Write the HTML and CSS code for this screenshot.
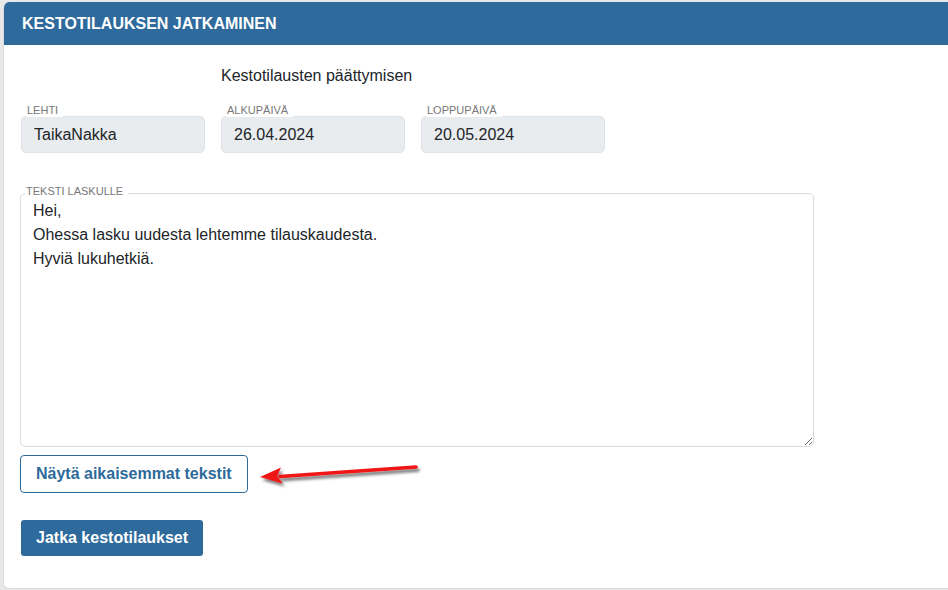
FILE: index.html
```html
<!DOCTYPE html>
<html lang="fi">
<head>
<meta charset="utf-8">
<title>Kestotilauksen jatkaminen</title>
<link rel="stylesheet" href="styles.css">
</head>
<body>
<div class="card">
  <div class="card-header">KESTOTILAUKSEN JATKAMINEN</div>
  <div class="card-body">
    <div class="fields-grid">
      <div class="intro">Kestotilausten päättymisen</div>
      <div class="field">
        <label class="float-label">Lehti</label>
        <div class="input">TaikaNakka</div>
      </div>
      <div class="field">
        <label class="float-label">Alkupäivä</label>
        <div class="input">26.04.2024</div>
      </div>
      <div class="field">
        <label class="float-label">Loppupäivä</label>
        <div class="input">20.05.2024</div>
      </div>
    </div>
    <div class="field text-field">
      <label class="float-label">Teksti laskulle</label>
      <textarea class="textarea">Hei,
Ohessa lasku uudesta lehtemme tilauskaudesta.
Hyviä lukuhetkiä.</textarea>
    </div>
    <button class="btn-outline">Näytä aikaisemmat tekstit</button>
    <button class="btn-primary">Jatka kestotilaukset</button>
    <svg class="arrow" width="190" height="40" viewBox="0 0 190 40">
      <defs>
        <filter id="sh" x="-20%" y="-50%" width="140%" height="200%">
          <feGaussianBlur in="SourceAlpha" stdDeviation="1.6"/>
          <feOffset dx="2" dy="3" result="b"/>
          <feComponentTransfer><feFuncA type="linear" slope="0.55"/></feComponentTransfer>
          <feMerge><feMergeNode/><feMergeNode in="SourceGraphic"/></feMerge>
        </filter>
      </defs>
      <g filter="url(#sh)">
        <path d="M166 10 L30 19.5" stroke="#f01414" stroke-width="3.6" stroke-linecap="round" fill="none"/>
        <path d="M10 20 L31 10.5 L27 19.5 L33 26.5 Z" fill="#f01414"/>
      </g>
    </svg>
  </div>
</div>
</body>
</html>
```
FILE: styles.css
```css
html, body {
  margin: 0;
  padding: 0;
  overflow: hidden;
}
body {
  background: #e8e8e8;
  font-family: "Liberation Sans", Arial, sans-serif;
  color: #212529;
  padding: 2px 0 0 3px;
  height: 590px;
  box-sizing: border-box;
}
.card {
  width: 980px;
  height: 587px;
  box-sizing: border-box;
  background: #fff;
  border: 1px solid #dcdcdc;
  border-top: none;
  border-radius: 6px;
  overflow: hidden;
}
.card-header {
  background: #2e6a9b;
  color: #fff;
  font-weight: bold;
  font-size: 16px;
  height: 43px;
  line-height: 43px;
  padding-left: 18px;
}
.card-body {
  position: relative;
  padding: 22px 0 0 16px;
}
.fields-grid {
  display: grid;
  grid-template-columns: 184px 184px 184px;
  column-gap: 16px;
  padding-left: 1px;
}
.intro {
  grid-column: 2 / 4;
  white-space: nowrap;
  font-size: 16px;
  line-height: 18px;
  margin-bottom: 19px;
}
.field {
  display: flex;
  flex-direction: column;
  align-items: flex-start;
}
.float-label {
  position: relative;
  z-index: 1;
  background: #fff;
  color: #777;
  font-size: 11px;
  line-height: 13px;
  text-transform: uppercase;
  padding: 0 5px 0 1px;
  margin-left: 5px;
  margin-bottom: -1px;
}
.input {
  align-self: stretch;
  box-sizing: border-box;
  height: 37px;
  background: #e9ecef;
  border: 1px solid #dfe2e6;
  border-radius: 5px;
  font-size: 16px;
  line-height: 35px;
  padding: 0 12px;
}
.text-field {
  margin-top: 32px;
}
.text-field .float-label {
  margin-bottom: -5px;
}
.textarea {
  display: block;
  width: 794px;
  height: 254px;
  box-sizing: border-box;
  border: 1px solid #dcdcdc;
  border-radius: 5px;
  font-family: "Liberation Sans", Arial, sans-serif;
  font-size: 16px;
  line-height: 24px;
  color: #212529;
  padding: 5px 12px;
  margin: 0;
  resize: both;
}
.btn-outline {
  display: block;
  margin-top: 8px;
  height: 38px;
  box-sizing: border-box;
  padding: 0 15px;
  background: #fff;
  border: 1px solid #2e6a9b;
  border-radius: 4px;
  color: #2e6a9b;
  font-family: "Liberation Sans", Arial, sans-serif;
  font-weight: bold;
  font-size: 16px;
}
.btn-primary {
  display: block;
  margin-top: 27px;
  margin-left: 1px;
  height: 36px;
  box-sizing: border-box;
  padding: 0 15px;
  background: #2e6a9b;
  border: none;
  border-radius: 3px;
  color: #fff;
  font-family: "Liberation Sans", Arial, sans-serif;
  font-weight: bold;
  font-size: 16px;
}
.arrow {
  position: absolute;
  left: 246px;
  top: 412px;
}
```
